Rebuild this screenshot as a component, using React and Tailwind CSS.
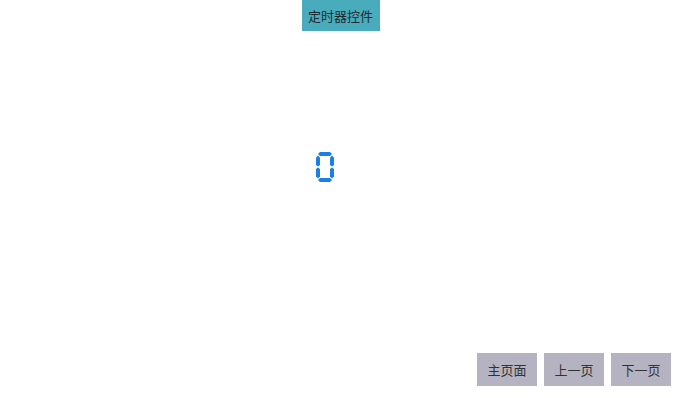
import React from 'react';

const font = { fontFamily: '"Noto Sans CJK SC", "Noto Sans", sans-serif' };

function SevenSegZero() {
  // hexagon-ended segments of a seven-segment "0"
  return (
    <svg width="18" height="30" viewBox="0 0 18 30">
      <g fill="#1b7fe6">
        <polygon points="4,0 14,0 16,2 14,4 4,4 2,2" />
        <polygon points="2,3.5 4,5.5 4,13 2,14.5 0,13 0,5.5" />
        <polygon points="16,3.5 18,5.5 18,13 16,14.5 14,13 14,5.5" />
        <polygon points="2,15.5 4,17 4,24.5 2,26.5 0,24.5 0,17" />
        <polygon points="16,15.5 18,17 18,24.5 16,26.5 14,24.5 14,17" />
        <polygon points="4,26 14,26 16,28 14,30 4,30 2,28" />
      </g>
    </svg>
  );
}

export default function App() {
  const buttons = ['主页面', '上一页', '下一页'];
  return (
    <div className="w-[680px] h-[398px] bg-white flex flex-col" style={font}>
      <div className="flex justify-center">
        <div className="w-[78px] h-[31px] bg-[#49acbd] flex items-center justify-center text-[13px] text-[#1d2a30] ml-[1px]">
          定时器控件
        </div>
      </div>

      <div className="flex-1">
        <div className="mt-[121px] ml-[316px]">
          <SevenSegZero />
        </div>
      </div>

      <div className="flex justify-end gap-[7px] pr-[9px] pb-[12px]">
        {buttons.map((b) => (
          <div
            key={b}
            className="w-[60px] h-[33px] bg-[#b5b3c1] flex items-center justify-center text-[13px] text-[#333]"
          >
            {b}
          </div>
        ))}
      </div>
    </div>
  );
}
